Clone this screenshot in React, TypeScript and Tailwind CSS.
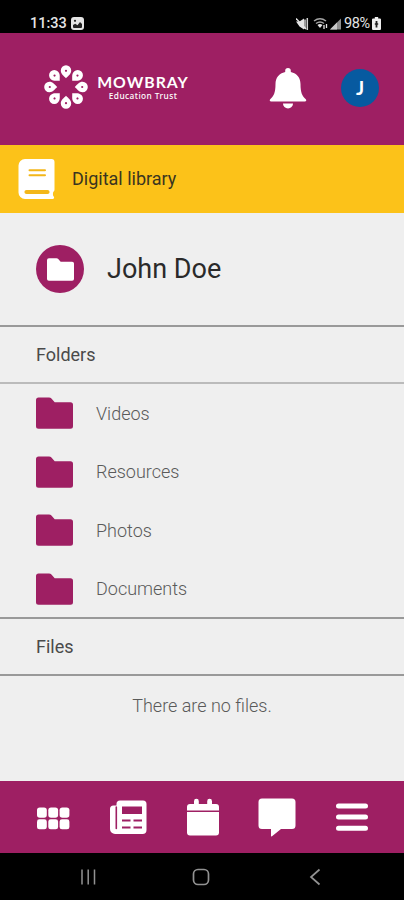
import type { ReactNode } from "react"

const folders = ["Videos", "Resources", "Photos", "Documents"]

const petals = [0, 45, 90, 135, 180, 225, 270, 315]

function StatusBar() {
  return (
    <div className="flex h-[33px] items-start justify-between bg-black pt-[15px] pr-[23px] pl-[30px] text-[#e4e4e4]">
      <div className="flex items-center gap-[5px]">
        <span className="w-[36px] text-[14.5px] leading-[17px] font-medium whitespace-nowrap">11:33</span>
        <svg width="13" height="13" viewBox="0 0 13 13">
          <rect width="13" height="13" rx="3" fill="#e4e4e4" />
          <circle cx="4" cy="3.8" r="1.1" fill="#222" />
          <path d="M2 8l2.2-1.2L6.5 8.2 9 5l2 2v3a1 1 0 0 1-1 1H3a1 1 0 0 1-1-1z" fill="#222" />
        </svg>
      </div>
      <div className="flex items-center">
        <svg width="48" height="14" viewBox="0 0 48 14" fill="#e4e4e4">
          <path d="M0 4.5h3.5L8 1.5v11L3.5 9.5z" />
          <path d="M9 2.5v9.5M11.3 1v12" stroke="#d0d0d0" strokeWidth="1.5" />
          <path d="M0 1.5l10 10.5" stroke="#e4e4e4" strokeWidth="1.4" />
          <path d="M18 4q6-4.500 12 0M20 6.500q4-3 8 0" fill="none" stroke="#a5a5a5" strokeWidth="1.5" />
          <path d="M21.500 8q2.500-2 5 0L24 11z" />
          <path d="M28 8v4M30.500 7v4" stroke="#e4e4e4" strokeWidth="1.3" />
          <path d="M34 12.500h11v-11z" fill="#8f8f8f" />
          <path d="M34 12.500h7V5.500z" fill="#c9c9c9" />
        </svg>
        <span className="w-[28px] text-[14.5px] leading-[17px] tracking-[-0.4px] whitespace-nowrap">98%</span>
        <svg width="9" height="13" viewBox="0 0 8 13" preserveAspectRatio="none">
          <path d="M2.5 0h3v1.500H7a1 1 0 0 1 1 1V12a1 1 0 0 1-1 1H1a1 1 0 0 1-1-1V2.500a1 1 0 0 1 1-1h1.500z" fill="#eee" />
          <path d="M4 4v6.500M2.500 7h3" stroke="#222" strokeWidth="1.6" />
        </svg>
      </div>
    </div>
  )
}

function Logo() {
  return (
    <div className="flex items-center">
      <svg width="46" height="46" viewBox="-23 -23 46 46">
        {petals.map((angle) => (
          <g key={angle} transform={`rotate(${angle})`}>
            <path d="M0-8.800C-2.500-11.500-5.200-13-5.200-16.600a5.200 5.200 0 0 1 10.400 0C5.200-13 2.500-11.500 0-8.800z" fill="#fff" />
            <circle cy="-16.2" r="1.1" fill="#9e1f63" />
          </g>
        ))}
      </svg>
      <div className="ml-[8px] flex w-[92px] flex-col items-center font-['Lato',sans-serif] text-white">
        <span className="text-[15.8px] leading-[17px] font-bold tracking-[1px] whitespace-nowrap">MOWBRAY</span>
        <span className="font-['Noto_Sans',sans-serif] text-[8.3px] leading-[12px] font-medium tracking-[0.45px] whitespace-nowrap">Education Trust</span>
      </div>
    </div>
  )
}

function Header() {
  return (
    <header className="flex h-[112px] items-start bg-[#9e1f63] pl-[43px]">
      <div className="pt-[31px]">
        <Logo />
      </div>
      <svg className="mt-[34px] ml-[80px]" width="38" height="43" viewBox="0 0 38 43" fill="#fff">
        <path d="M19 1a2.800 2.800 0 0 1 2.800 2.800v1.300C28 6.400 31.500 11 31.500 17c0 8.500 1.700 12.300 5.300 15.200.9.900.4 2.300-.9 2.300H2.100c-1.300 0-1.800-1.400-.9-2.300C4.800 29.300 6.500 25.500 6.500 17c0-6 3.500-10.600 9.700-11.900V3.800A2.800 2.800 0 0 1 19 1z" />
        <path d="M14 36.500h10a5 5 0 0 1-10 0z" />
      </svg>
      <div className="mt-[36px] ml-[34px] flex size-[38px] items-center justify-center rounded-full bg-[#075aa0] font-['Lato',sans-serif] text-[19px] font-bold text-white">
        J
      </div>
    </header>
  )
}

function LibraryBanner() {
  return (
    <div className="flex h-[68px] items-center bg-[#fcc219] pl-[18px]">
      <svg width="37" height="42" viewBox="0 0 37 42">
        <path d="M7 1h26.500A3 3 0 0 1 36.500 4v27.500c0 1.200-.5 2-1.300 2.500-.4 1.500-.4 2.800 0 4 1.500.8 1.200 3-.7 3H7a6.500 6.500 0 0 1-6.500-6.500v-27A6.500 6.500 0 0 1 7 1z" fill="#fff" />
        <path d="M11.500 12.300h15.500M11.500 17.300h15.500" stroke="#f3b71a" strokeWidth="2" strokeLinecap="round" />
        <path d="M8.500 34H29.500" stroke="#f3b71a" strokeWidth="4.2" strokeLinecap="round" />
      </svg>
      <span className="ml-[17px] text-[18px] leading-6 text-[#3a3520]">Digital library</span>
    </div>
  )
}

function FolderIcon({ className }: { className: string }) {
  return (
    <svg className={className} viewBox="0 0 36 32" preserveAspectRatio="none" fill="currentColor">
      <path d="M2.500.5h10.200c1 0 1.700.3 2.300 1l3.200 3.700h15.300A2.500 2.500 0 0 1 36 7.700v21.600a2.500 2.500 0 0 1-2.500 2.500h-31A2.500 2.500 0 0 1 0 29.300V3A2.500 2.500 0 0 1 2.500.5z" />
    </svg>
  )
}

function SectionTitle({ children }: { children: ReactNode }) {
  return (
    <h2 className="flex items-center border-t-2 border-[#999] py-[14px] pl-[36px] text-[18px] leading-[27px] text-[#4a4a4a]">
      {children}
    </h2>
  )
}

function TabBar() {
  return (
    <nav className="flex h-[72px] items-center justify-between bg-[#9e1f63] pr-[35px] pl-[36px] text-white">
      <svg width="34" height="40" viewBox="0 0 34 40" fill="currentColor">
        {[1, 12.3, 23.6].map((x) => (
          <g key={x}>
            <rect x={x} y="10.5" width="9.8" height="10.3" rx="2.8" />
            <rect x={x} y="22.3" width="9.8" height="10" rx="2.4" />
          </g>
        ))}
      </svg>
      <svg width="38" height="40" viewBox="0 0 38 40">
        <path d="M11 3.500h23a3.500 3.500 0 0 1 3.500 3.500v26a4 4 0 0 1-4 4H6a5 5 0 0 1-5-5V12a3.500 3.500 0 0 1 3.500-3.500H7.500V7A3.500 3.500 0 0 1 11 3.500z" fill="#fff" />
        <path d="M7.300 10v21.500" stroke="#9e1f63" strokeWidth="1.6" strokeLinecap="round" />
        <path d="M13 9.500h20V17H13z" fill="#9e1f63" />
        <path d="M13 23.500h8.500M24.500 23.500H33M13 30.500h8.500M24.500 30.500H33" stroke="#9e1f63" strokeWidth="2" />
      </svg>
      <svg width="34" height="42" viewBox="0 0 34 42">
        <path d="M4 8h4V5.200a2.400 2.400 0 0 1 4.800 0V8h8.400V5.200a2.400 2.400 0 0 1 4.800 0V8h4a3 3 0 0 1 3 3v3.400H1V11a3 3 0 0 1 3-3zM1 16h32v20.500a3 3 0 0 1-3 3H4a3 3 0 0 1-3-3z" fill="#fff" />
      </svg>
      <svg width="38" height="42" viewBox="0 0 38 42" fill="currentColor">
        <path d="M4 2.500h30a3.500 3.500 0 0 1 3.500 3.500v23.500a3.500 3.500 0 0 1-3.500 3.500H23l-9 7.200c-.6.500-1 .2-1-.5V33H4a3.500 3.500 0 0 1-3.500-3.500V6A3.500 3.500 0 0 1 4 2.500z" />
      </svg>
      <svg width="34" height="40" viewBox="0 0 34 40">
        <path d="M3.500 9h27M3.500 20h27M3.500 31.200h27" stroke="#fff" strokeWidth="5" strokeLinecap="round" />
      </svg>
    </nav>
  )
}

function SystemNav() {
  return (
    <div className="flex h-[47px] items-center bg-black pl-[80px]">
      <svg width="16" height="18" viewBox="0 0 16 18" stroke="#929292" strokeWidth="1.5">
        <path d="M2 1.500v15M8.200 1.500v15M14.500 1.500v15" />
      </svg>
      <svg className="ml-[96px]" width="18" height="18" viewBox="0 0 18 18" fill="none" stroke="#929292" strokeWidth="1.7">
        <rect x="1.5" y="1.5" width="15" height="15" rx="4.5" />
      </svg>
      <svg className="ml-[99px]" width="12" height="18" viewBox="0 0 12 18" fill="none" stroke="#929292" strokeWidth="1.7">
        <path d="M10.500 1.500L2 9l8.500 7.500" />
      </svg>
    </div>
  )
}

export default function App() {
  return (
    <div className="flex h-[900px] w-[404px] flex-col overflow-hidden bg-[#efefef] font-['Roboto',sans-serif]">
      <StatusBar />
      <Header />
      <LibraryBanner />

      <main className="flex-1">
        <div className="flex h-[112px] items-center pl-[36px]">
          <div className="flex size-[48px] items-center justify-center rounded-full bg-[#9e1f63] text-white">
            <FolderIcon className="h-[23px] w-[27px]" />
          </div>
          <h1 className="ml-[23px] text-[27px] leading-8 text-[#2a2a2a]">John Doe</h1>
        </div>

        <SectionTitle>Folders</SectionTitle>
        <ul className="h-[235px] border-t-2 border-[#bbb]">
          {folders.map((name) => (
            <li key={name} className="flex h-[58.5px] items-center pl-[36px]">
              <FolderIcon className="h-[32px] w-[37px] text-[#9e1f63]" />
              <span className="ml-[23px] text-[18px] font-light text-[#5a5a5a]">{name}</span>
            </li>
          ))}
        </ul>

        <SectionTitle>Files</SectionTitle>
        <p className="border-t-2 border-[#999] pt-[18px] text-center text-[18px] leading-6 font-light text-[#5a5a5a]">
          There are no files.
        </p>
      </main>

      <TabBar />
      <SystemNav />
    </div>
  )
}
